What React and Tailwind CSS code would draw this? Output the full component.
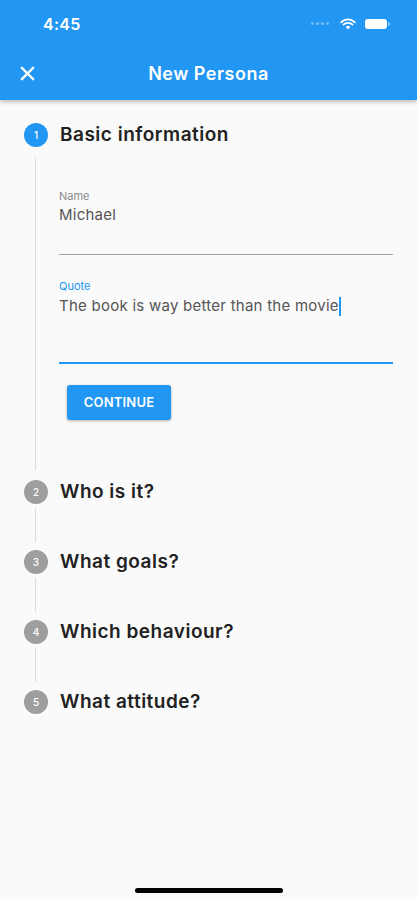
import React from 'react'

const steps = ['Who is it?', 'What goals?', 'Which behaviour?', 'What attitude?']

const StepCircle = ({ n, active }) => (
  <div className={`w-6 h-6 rounded-full flex items-center justify-center text-white text-[10px] font-medium shrink-0 ${active ? 'bg-[#2196f3]' : 'bg-[#9e9e9e]'}`}>
    {n}
  </div>
)

const App = () => {
  return (
    <div className="w-full h-[900px] bg-[#fafafa] flex flex-col font-['Inter',sans-serif] text-[#212121]">

      {/* Header */}
      <div className="bg-[#2196f3] h-[100px] shadow-[0_2px_4px_rgba(0,0,0,0.25)] flex flex-col shrink-0">
        <div className="h-[47px] flex items-center justify-between pl-[43px] pr-[27px]">
          <span className="text-white text-[16px] font-semibold tracking-[0.3px]">4:45</span>
          <div className="flex items-center gap-[9px]">
            <div className="flex gap-[2px] mr-[2px]">
              {[0, 1, 2, 3].map(i => <span key={i} className="w-[3px] h-[3px] rounded-full bg-white/40" />)}
            </div>
            <svg width="16" height="12" viewBox="0 0 16 12">
              <path d="M8 11.5 L5.6 8.9 A3.4 3.4 0 0 1 10.4 8.9 Z" fill="white" />
              <path d="M3.4 6.7 A6.5 6.5 0 0 1 12.6 6.7" stroke="white" strokeWidth="1.8" fill="none" strokeLinecap="round" />
              <path d="M1.1 4.3 A9.8 9.8 0 0 1 14.9 4.3" stroke="white" strokeWidth="1.8" fill="none" strokeLinecap="round" />
            </svg>
            <div className="flex items-center">
              <div className="w-[22px] h-[10px] rounded-[3px] bg-white" />
              <div className="w-[2px] h-[4px] rounded-r-sm bg-white/50 ml-[1px]" />
            </div>
          </div>
        </div>
        <div className="h-[53px] flex items-center relative">
          <div className="absolute left-[20px] top-[19px]">
            <svg width="15" height="15" viewBox="0 0 15 15">
              <path d="M2 2 L13 13 M13 2 L2 13" stroke="white" strokeWidth="2.4" strokeLinecap="square" />
            </svg>
          </div>
          <span className="w-full text-center text-white text-[18px] font-semibold tracking-[0.5px]">New Persona</span>
        </div>
      </div>

      {/* Step 1 */}
      <div className="pt-[23px] flex items-center pl-[24px]">
        <StepCircle n={1} active />
        <span className="ml-[12px] text-[19px] leading-[24px] font-semibold tracking-[0.5px]">Basic information</span>
      </div>
      <div className="ml-[35px] mt-[10px] border-l border-[#dcdcdc] pl-[23px] pr-[24px] pt-[33px] pb-[50px]">
        <div className="h-[65px] border-b border-[#9e9e9e]">
          <div className="text-[11px] leading-[12px] text-[#8a8a8a]">Name</div>
          <div className="mt-[3px] text-[15px] leading-[20px] text-[#555] tracking-[0.25px]">Michael</div>
        </div>
        <div className="mt-[25px] h-[84px] border-b-2 border-[#2196f3]">
          <div className="text-[11px] leading-[12px] text-[#2196f3]">Quote</div>
          <div className="mt-[4px] text-[15px] leading-[20px] text-[#555] tracking-[0.25px] flex items-center">
            The book is way better than the movie
            <span className="inline-block w-[2px] h-[19px] bg-[#2196f3]" />
          </div>
        </div>
        <button className="mt-[21px] ml-[8px] w-[104px] h-[35px] rounded-[3px] bg-[#2196f3] text-white text-[13px] font-semibold tracking-[0.2px] shadow-[0_1px_3px_rgba(0,0,0,0.3)]">
          CONTINUE
        </button>
      </div>

      {/* Remaining steps */}
      <div className="pt-[10px]">
        {steps.map((title, i) => (
          <div key={i}>
            <div className="flex items-center pl-[24px] h-6">
              <StepCircle n={i + 2} />
              <span className="ml-[12px] text-[19px] leading-[24px] font-semibold tracking-[0.5px]">{title}</span>
            </div>
            {i < steps.length - 1 && (
              <div className="h-[46px] pt-[4px] pb-[8px] pl-[35px]">
                <div className="h-full border-l border-[#dcdcdc]" />
              </div>
            )}
          </div>
        ))}
      </div>

      <div className="flex-1" />

      {/* Home indicator */}
      <div className="flex justify-center pb-[7px]">
        <div className="w-[148px] h-[5px] rounded-full bg-black" />
      </div>
    </div>
  )
}

export default App
